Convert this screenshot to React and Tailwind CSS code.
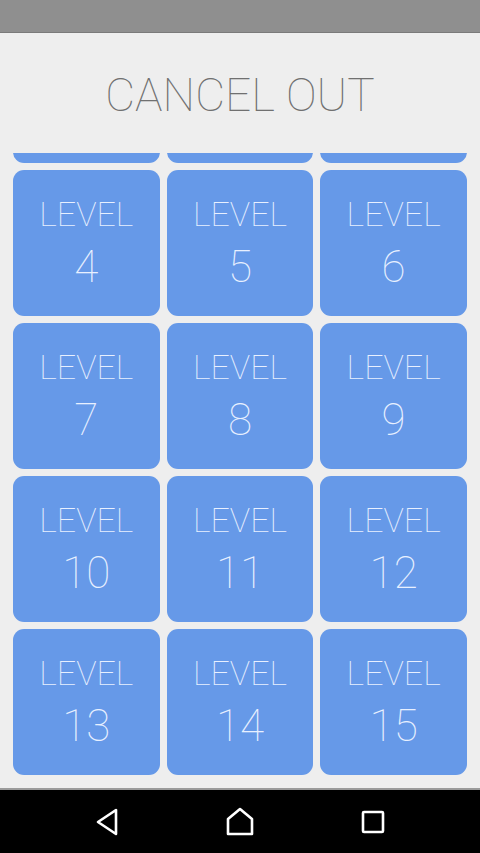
import React from 'react';

const levels = Array.from({ length: 15 }, (_, i) => i + 1);

const LevelTile = ({ n }) => (
    <div className="h-[146px] rounded-[11px] bg-[#6699e8] flex flex-col items-center justify-center text-[#e8f0ff] font-thin">
        <span className="text-[34px] leading-none">LEVEL</span>
        <span className="text-[44px] leading-none mt-[14px]">{n}</span>
    </div>
);

const App = () => {
    return (
        <div className="w-[480px] h-[853px] flex flex-col bg-[#eeeeee] overflow-hidden" style={{ fontFamily: 'Roboto, "Noto Sans", sans-serif' }}>
            {/* status bar */}
            <div className="h-[33px] bg-[#8f8f8f] border-b border-[#7a7a7a] shrink-0"></div>

            <div className="h-[120px] shrink-0 flex items-center justify-center pt-[3px]">
                <h1 className="text-[46px] font-thin text-[#707070] leading-none">CANCEL OUT</h1>
            </div>

            {/* level list, scrolled down one row */}
            <div className="flex-1 overflow-hidden">
                <div className="grid grid-cols-3 gap-[7px] px-[13px] -mt-[136px] pb-[12px]">
                    {levels.map(n => <LevelTile key={n} n={n} />)}
                </div>
            </div>

            {/* nav bar */}
            <div className="h-[65px] shrink-0 bg-black border-t-2 border-[#9a9a9a] flex items-center justify-center gap-[103px]">
                <div className="w-[30px] flex justify-center">
                    <svg width="24" height="28" viewBox="0 0 24 28" fill="none" stroke="white" strokeWidth="2.6" strokeLinejoin="round">
                        <path d="M21 2 L21 26 L3 14 Z" />
                    </svg>
                </div>
                <div className="w-[30px] flex justify-center">
                    <svg width="30" height="29" viewBox="0 0 30 29" fill="none" stroke="white" strokeWidth="2.6" strokeLinejoin="round">
                        <path d="M15 2 L27 12 L27 27 L3 27 L3 12 Z" />
                    </svg>
                </div>
                <div className="w-[30px] flex justify-center">
                    <svg width="24" height="24" viewBox="0 0 24 24" fill="none" stroke="white" strokeWidth="2.6">
                        <rect x="2" y="2" width="20" height="20" rx="1" />
                    </svg>
                </div>
            </div>
        </div>
    );
};

export default App;
